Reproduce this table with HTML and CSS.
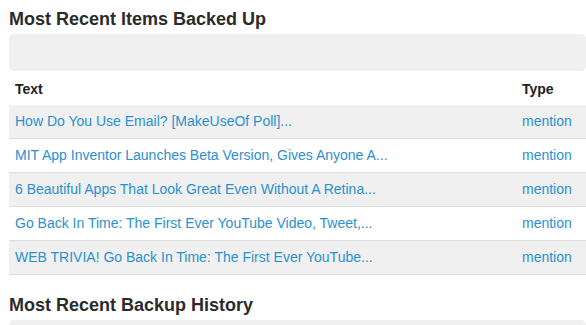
FILE: index.html
```html
<!DOCTYPE html>
<html lang="en">
<head>
    <meta charset="UTF-8">
    <meta name="viewport" content="width=device-width, initial-scale=1.0">
    <title>Backups</title>
    <link rel="stylesheet" href="styles.css">
</head>
<body>
    <div class="container">
        <h2>Most Recent Items Backed Up</h2>
        <div class="well"></div>
        <table class="items">
            <thead>
                <tr>
                    <th>Text</th>
                    <th class="type">Type</th>
                </tr>
            </thead>
            <tbody>
                <tr>
                    <td><a href="#">How Do You Use Email? [MakeUseOf Poll]...</a></td>
                    <td><a href="#">mention</a></td>
                </tr>
                <tr>
                    <td><a href="#">MIT App Inventor Launches Beta Version, Gives Anyone A...</a></td>
                    <td><a href="#">mention</a></td>
                </tr>
                <tr>
                    <td><a href="#">6 Beautiful Apps That Look Great Even Without A Retina...</a></td>
                    <td><a href="#">mention</a></td>
                </tr>
                <tr>
                    <td><a href="#">Go Back In Time: The First Ever YouTube Video, Tweet,...</a></td>
                    <td><a href="#">mention</a></td>
                </tr>
                <tr>
                    <td><a href="#">WEB TRIVIA! Go Back In Time: The First Ever YouTube...</a></td>
                    <td><a href="#">mention</a></td>
                </tr>
            </tbody>
        </table>

        <h2>Most Recent Backup History</h2>
        <div class="well"></div>
    </div>
</body>
</html>
```

FILE: styles.css
```css
* {
    margin: 0;
    padding: 0;
    box-sizing: border-box;
}

body {
    font-family: 'Liberation Sans', Arial, sans-serif;
    font-size: 14px;
    line-height: 20px;
    color: #333;
    background-color: #fff;
    overflow: hidden;
}

.container {
    padding: 9px 0 0 9px;
}

h2 {
    font-size: 18px;
    line-height: 20px;
    font-weight: bold;
    color: #2b2b2b;
    margin-bottom: 5px;
}

.well {
    height: 37px;
    background-color: #f0f0f0;
    border-radius: 5px;
}

.items {
    width: 100%;
    border-collapse: collapse;
    margin-bottom: 20px;
}

.items th {
    text-align: left;
    font-weight: bold;
    color: #222;
    padding: 8px 6px 6px;
}

.items th.type {
    width: 70px;
}

.items td {
    padding: 6px 6px 7px;
    border-bottom: 1px solid #ddd;
}

.items tbody tr:nth-child(odd) td {
    background-color: #f0f0f0;
}

.items a {
    color: #2b90d0;
    text-decoration: none;
}
```
